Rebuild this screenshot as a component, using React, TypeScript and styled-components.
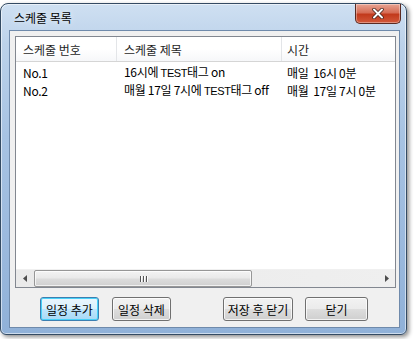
import React from "react";
import styled, { createGlobalStyle } from "styled-components";

const Global = createGlobalStyle`
  html, body { margin: 0; padding: 0; background: #ffffff; }
  body { font-family: "Noto Sans CJK KR", "Noto Sans", sans-serif; font-size: 12px; color: #000; }
`;

const Page = styled.div`
  width: 414px;
  height: 339px;
  overflow: hidden;
  padding-top: 3px;
  box-sizing: border-box;
`;

const Window = styled.div`
  width: 407px;
  height: 332px;
  box-sizing: border-box;
  border: 1px solid #344b63;
  border-radius: 8px 8px 6px 6px;
  background: linear-gradient(180deg, #cfe0f2 0%, #bcd2ea 12%, #a7c3e3 40%, #9cbade 70%, #90b1d8 100%);
  box-shadow: 2px 2px 4px rgba(0,0,0,0.45), inset 0 0 0 1px rgba(255,255,255,0.55);
  display: flex;
  flex-direction: column;
`;

const TitleBar = styled.div`
  height: 26px;
  display: flex;
  justify-content: space-between;
  align-items: flex-start;
  padding: 0 5px 0 13px;
`;

const TitleText = styled.div`
  margin-top: 7px;
  font-size: 12px;
  line-height: 14px;
  color: #000;
  text-shadow: 0 0 6px rgba(255,255,255,0.9);
`;

const CloseButton = styled.div`
  width: 46px;
  height: 20px;
  box-sizing: border-box;
  border: 1px solid #5a2a22;
  border-top: none;
  border-radius: 0 0 5px 5px;
  background: linear-gradient(180deg, #e8a493 0%, #d66d56 45%, #c23a1c 55%, #d2583b 100%);
  box-shadow: inset 0 0 0 1px rgba(255,255,255,0.35);
  display: flex;
  align-items: center;
  justify-content: center;
`;

const Client = styled.div`
  flex: 1;
  margin: 0 6px 6px 8px;
  box-sizing: border-box;
  border: 1px solid #6f8aab;
  background: #f0f0f0;
  display: flex;
  flex-direction: column;
  padding: 5px 3px 0 5px;
`;

const ListView = styled.div`
  height: 252px;
  box-sizing: border-box;
  border: 1px solid #828790;
  background: #fff;
  display: flex;
  flex-direction: column;
`;

const Header = styled.div`
  height: 24px;
  display: grid;
  grid-template-columns: 101px 165px 1fr;
  background: linear-gradient(180deg, #ffffff 0%, #ffffff 50%, #f6f7f9 100%);
  border-bottom: 1px solid #d5d5d5;
`;

const HeaderCell = styled.div`
  display: flex;
  align-items: center;
  padding-left: 7px;
  border-right: 1px solid #e3e5e8;
  font-size: 12px;
  color: #1e1e1e;
  &:last-child { border-right: none; padding-left: 5px; }
`;

const Rows = styled.div`
  flex: 1;
  padding-top: 1px;
`;

const Row = styled.div`
  height: 18px;
  display: grid;
  grid-template-columns: 101px 165px 1fr;
  align-items: center;
`;

const Cell = styled.div<{ $pad?: number }>`
  padding-left: ${(p) => p.$pad ?? 7}px;
  font-size: 12px;
  line-height: 17px;
  white-space: nowrap;
  letter-spacing: -0.3px;
`;

const Latin = styled.span`
  font-family: "Liberation Sans", Arial, sans-serif;
  font-size: 11px;
  letter-spacing: -0.4px;
`;

const HScroll = styled.div`
  height: 17px;
  display: flex;
  align-items: stretch;
  background: linear-gradient(90deg, #eaeaea, #efefef);
  border-top: 1px solid #f0f0f0;
`;

const Arrow = styled.div`
  width: 17px;
  display: flex;
  align-items: center;
  justify-content: center;
`;

const Track = styled.div`
  flex: 1;
  display: flex;
  align-items: stretch;
  padding: 0 1px;
`;

const Thumb = styled.div`
  width: 218px;
  box-sizing: border-box;
  border: 1px solid #979797;
  border-radius: 2px;
  background: linear-gradient(180deg, #f4f4f4 0%, #eaeaea 45%, #dcdcdc 55%, #d0d0d0 100%);
  box-shadow: inset 0 0 0 1px rgba(255,255,255,0.7);
  display: flex;
  align-items: center;
  justify-content: center;
`;

const Grip = styled.div`
  display: flex;
  gap: 2px;
  & > span { width: 1px; height: 6px; background: #555; box-shadow: 1px 0 0 #fff; }
`;

const ButtonRow = styled.div`
  display: flex;
  align-items: center;
  padding: 9px 0 0 25px;
`;

const Button = styled.div<{ $w: number; $focus?: boolean; $ml: number }>`
  width: ${(p) => p.$w}px;
  height: 24px;
  margin-left: ${(p) => p.$ml}px;
  box-sizing: border-box;
  border: 1px solid ${(p) => (p.$focus ? "#3c7fb1" : "#707070")};
  border-radius: 3px;
  background: ${(p) =>
    p.$focus
      ? "linear-gradient(180deg, #eaf6fd 0%, #d9f0fc 50%, #bee6fd 51%, #a7d9f5 100%)"
      : "linear-gradient(180deg, #f2f2f2 0%, #ebebeb 50%, #dddddd 51%, #cfcfcf 100%)"};
  box-shadow: inset 0 0 0 1px ${(p) => (p.$focus ? "#48d1f8" : "rgba(255,255,255,0.75)")};
  display: flex;
  align-items: center;
  justify-content: center;
  font-size: 12px;
  color: #000;
  white-space: nowrap;
`;

export default function App() {
  return (
    <Page>
      <Global />
      <Window>
        <TitleBar>
          <TitleText>스케줄 목록</TitleText>
          <CloseButton>
            <svg width="12" height="11" viewBox="0 0 12 11">
              <path d="M2 1.5 L10 9.5 M10 1.5 L2 9.5" stroke="#3a1a12" strokeWidth="3.4" strokeLinecap="round" />
              <path d="M2 1.5 L10 9.5 M10 1.5 L2 9.5" stroke="#ffffff" strokeWidth="2" strokeLinecap="round" />
            </svg>
          </CloseButton>
        </TitleBar>
        <Client>
          <ListView>
            <Header>
              <HeaderCell>스케줄 번호</HeaderCell>
              <HeaderCell>스케줄 제목</HeaderCell>
              <HeaderCell>시간</HeaderCell>
            </Header>
            <Rows>
              <Row>
                <Cell>No.1</Cell>
                <Cell>16시에 <Latin>TEST</Latin>태그 on</Cell>
                <Cell $pad={5}>매일&nbsp;&nbsp;16시 0분</Cell>
              </Row>
              <Row>
                <Cell>No.2</Cell>
                <Cell>매월 17일 7시에 <Latin>TEST</Latin>태그 off</Cell>
                <Cell $pad={5}>매월&nbsp;&nbsp;17일 7시 0분</Cell>
              </Row>
            </Rows>
            <HScroll>
              <Arrow>
                <svg width="4" height="7" viewBox="0 0 4 7"><path d="M4 0 L0 3.5 L4 7 Z" fill="#4d4d4d" /></svg>
              </Arrow>
              <Track>
                <Thumb>
                  <Grip><span /><span /><span /></Grip>
                </Thumb>
              </Track>
              <Arrow>
                <svg width="4" height="7" viewBox="0 0 4 7"><path d="M0 0 L4 3.5 L0 7 Z" fill="#4d4d4d" /></svg>
              </Arrow>
            </HScroll>
          </ListView>
          <ButtonRow>
            <Button $w={59} $ml={0} $focus>일정 추가</Button>
            <Button $w={59} $ml={13}>일정 삭제</Button>
            <Button $w={70} $ml={52}>저장 후 닫기</Button>
            <Button $w={63} $ml={12}>닫기</Button>
          </ButtonRow>
        </Client>
      </Window>
    </Page>
  );
}
